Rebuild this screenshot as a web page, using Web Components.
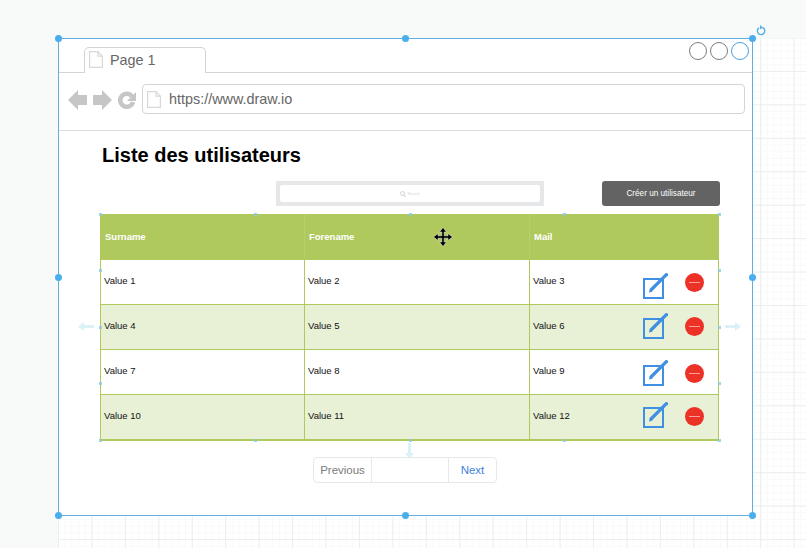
<!DOCTYPE html>
<html lang="fr">
<head>
<meta charset="utf-8">
<title>Liste des utilisateurs</title>
<style>
  html, body { margin: 0; height: 100%; overflow: hidden; background: #f8fafa; }
  body { font-family: "Liberation Sans", Arial, sans-serif; }
</style>
</head>
<body>
<draw-canvas>
  <browser-window url="https://www.draw.io" tab="Page 1">
    <h-title>Liste des utilisateurs</h-title>
    <tool-row>
      <search-box></search-box>
      <dark-button>Créer un utilisateur</dark-button>
    </tool-row>
    <user-table></user-table>
    <page-nav></page-nav>
  </browser-window>
  <select-frame></select-frame>
  <move-cursor></move-cursor>
</draw-canvas>

<script>
const pageIcon = `<svg width="14" height="17" viewBox="0 0 14 17" fill="#fff" stroke="#d8d8d8" stroke-width="1.200"><path d="M.6.6h8.400l4.400 4.600v11.200H.6z"/><path d="M9 .6v4.600h4.400" fill="none"/></svg>`;

class DrawCanvas extends HTMLElement {
    constructor() {
        super();
        this.attachShadow({mode: 'open'}).innerHTML = `
            <style>
                :host { display: block; position: relative; width: 806px; height: 548px; overflow: hidden; }
                .grid {
                    position: absolute; left: 58px; top: 38px; right: 0; bottom: 0;
                    background-color: #fff;
                    background-image:
                        linear-gradient(#eceeee 1px, transparent 1px),
                        linear-gradient(90deg, #eceeee 1px, transparent 1px),
                        linear-gradient(#f8f9f9 1px, transparent 1px),
                        linear-gradient(90deg, #f8f9f9 1px, transparent 1px);
                    background-size: 33.450px 33.450px, 33.450px 33.450px, 6.690px 6.690px, 6.690px 6.690px;
                    background-position: 0 -.5px, 0 0, 0 -.5px, 0 0;
                }
            </style>
            <div class="grid"></div>
            <slot></slot>`;
    }
}

class BrowserWindow extends HTMLElement {
    constructor() {
        super();
        const shadow = this.attachShadow({mode: 'open'});
        shadow.innerHTML = `
            <style>
                :host {
                    display: flex; flex-direction: column;
                    position: absolute; left: 58px; top: 38px;
                    width: 694px; height: 478px;
                    background: #fff; box-sizing: border-box;
                }
                .tabs {
                    height: 35px; box-sizing: border-box; padding: 9px 3px 0 26px;
                    border-bottom: 1px solid #d4d4d4;
                    display: flex; justify-content: space-between; align-items: flex-start;
                }
                .tab {
                    width: 122px; height: 26px; box-sizing: border-box;
                    border: 1px solid #d4d4d4; border-bottom: none;
                    border-radius: 5px 5px 0 0; background: #fff;
                    display: flex; align-items: center; gap: 7px; padding: 0 0 2px 4px;
                    color: #666; font-size: 14.400px;
                    margin-bottom: -1px; position: relative;
                }
                .dots { display: flex; gap: 3px; margin-top: -5px; }
                .dots i { width: 16px; height: 16px; border: 1px solid #7d7d7d; border-radius: 50%; display: block; }
                .dots i:last-child { border-color: #4a9fe0; }
                .bar {
                    height: 58px; box-sizing: border-box; padding: 11px 7px 0 10px;
                    border-bottom: 1px solid #ddd;
                    display: flex; align-items: flex-start; gap: 6px;
                }
                .nav { display: flex; align-items: center; gap: 6px; height: 32px; }
                .url {
                    flex: 1; height: 30px; box-sizing: border-box;
                    border: 1px solid #d4d4d4; border-radius: 4px;
                    display: flex; align-items: center; gap: 8px; padding-left: 4px;
                    color: #666; font-size: 14.400px;
                }
                .content { flex: 1; padding: 12px 32px 0 42px; }
            </style>
            <div class="tabs">
                <div class="tab">${pageIcon}<span>${this.getAttribute('tab')}</span></div>
                <div class="dots"><i></i><i></i><i></i></div>
            </div>
            <div class="bar">
                <div class="nav">
                    <svg width="19" height="20" viewBox="0 0 19 20" fill="#c6c6c6"><path d="M0 10 10 0v5h9v10h-9v5z"/></svg>
                    <svg width="19" height="20" viewBox="0 0 19 20" fill="#c6c6c6"><path d="M19 10 9 0v5H0v10h9v5z"/></svg>
                    <svg width="18" height="18" viewBox="0 0 18 18"><path d="M14 5.500A6.500 6.500 0 1 0 15 11" fill="none" stroke="#c6c6c6" stroke-width="4.500"/><path d="M18 1v9h-9z" fill="#c6c6c6"/></svg>
                </div>
                <div class="url">${pageIcon}<span>${this.getAttribute('url')}</span></div>
            </div>
            <div class="content"><slot></slot></div>`;
    }
}

class HTitle extends HTMLElement {
    constructor() {
        super();
        this.attachShadow({mode: 'open'}).innerHTML = `
            <style>
                :host { display: block; height: 24px; margin-left: 2px; font-size: 20px; line-height: 24px; font-weight: bold; color: #000; }
            </style>
            <slot></slot>`;
    }
}

class ToolRow extends HTMLElement {
    constructor() {
        super();
        this.attachShadow({mode: 'open'}).innerHTML = `
            <style>
                :host { display: flex; justify-content: space-between; height: 25px; margin-top: 14px; padding-left: 176px; width: 444px; }
            </style>
            <slot></slot>`;
    }
}

class SearchBox extends HTMLElement {
    constructor() {
        super();
        this.attachShadow({mode: 'open'}).innerHTML = `
            <style>
                :host {
                    display: block; width: 268px; height: 25px; box-sizing: border-box;
                    padding: 4px; background: #e6e7e8;
                }
                div {
                    height: 100%; background: #fff; border-radius: 2px;
                    display: flex; align-items: center; justify-content: center; gap: 1px;
                    color: #d4d6d8; font-size: 4px;
                }
            </style>
            <div>
                <svg width="6" height="6" viewBox="0 0 6 6" fill="none" stroke="#cfd2d4"><circle cx="2.500" cy="2.500" r="2"/><path d="M4 4l2 2"/></svg>
                <span>Search</span>
            </div>`;
    }
}

class DarkButton extends HTMLElement {
    constructor() {
        super();
        this.attachShadow({mode: 'open'}).innerHTML = `
            <style>
                :host {
                    display: flex; align-items: center; justify-content: center;
                    width: 118px; height: 25px; border-radius: 3px;
                    background: #636363; color: #fff; font-size: 8.200px;
                }
            </style>
            <slot></slot>`;
    }
}

class EditIcon extends HTMLElement {
    constructor() {
        super();
        this.attachShadow({mode: 'open'}).innerHTML = `
            <style>:host { display: block; width: 26px; height: 26px; } svg { display: block; }</style>
            <svg width="26" height="26" viewBox="0 0 26 26" fill="none">
                <rect x="2" y="6" width="19" height="19" stroke="#3f8fe3" stroke-width="2"/>
                <path d="M8.500 17.500 25.500.5" stroke="#3f8fe3" stroke-width="3.200"/>
                <path d="M7 19.500l.8-3.500 2.700 2.700z" fill="#3f8fe3"/>
            </svg>`;
    }
}

class DeleteIcon extends HTMLElement {
    constructor() {
        super();
        this.attachShadow({mode: 'open'}).innerHTML = `
            <style>
                :host { display: flex; align-items: center; justify-content: center; width: 19px; height: 19px; border-radius: 50%; background: #ec3126; }
                i { display: block; width: 11px; height: 1px; background: #f4a09a; }
            </style>
            <i></i>`;
    }
}

class UserTable extends HTMLElement {
    constructor() {
        super();
        const head = ['Surname', 'Forename', 'Mail'];
        const rows = [
            ['Value 1', 'Value 2', 'Value 3'],
            ['Value 4', 'Value 5', 'Value 6'],
            ['Value 7', 'Value 8', 'Value 9'],
            ['Value 10', 'Value 11', 'Value 12']
        ];
        // icons are not aligned the same way in each row of the mockup
        const editTop = [13, 8, 10, 7];
        const delTop = [13, 12, 14, 12];
        const rowHtml = rows.map((r, i) => `
            <div class="row ${i % 2 ? 'alt' : ''}">
                <div class="cell">${r[0]}</div>
                <div class="cell">${r[1]}</div>
                <div class="cell last">
                    <span>${r[2]}</span>
                    <div class="acts">
                        <edit-icon style="margin-top:${editTop[i]}px"></edit-icon>
                        <delete-icon style="margin-top:${delTop[i]}px"></delete-icon>
                    </div>
                </div>
            </div>`).join('');
        this.attachShadow({mode: 'open'}).innerHTML = `
            <style>
                :host {
                    display: block; width: 619px; margin-top: 8px;
                    box-sizing: border-box; color: #111; font-size: 9.500px;
                    border: 1px solid #afc95d; border-top: none; border-bottom-width: 2px;
                }
                .row {
                    display: grid; grid-template-columns: 203px 225px 1fr;
                    height: 45px; box-sizing: border-box; border-top: 1px solid #afc95d;
                }
                .row:nth-child(2) { border-top: none; }
                .row.alt { background: #e8f0d6; }
                .row.head { background: #afc95d; color: #fff; font-weight: bold; border-top: none; }
                .cell { display: flex; align-items: center; padding-left: 3px; padding-bottom: 4px; border-left: 1px solid #afc95d; }
                .cell:first-child { border-left: none; }
                .head .cell { padding-left: 4px; padding-bottom: 0; border-left-color: #b7cf6b; }
                .acts { margin-left: auto; margin-right: 14px; align-self: flex-start; display: flex; align-items: flex-start; gap: 17px; }
            </style>
            <div class="row head"><div class="cell">${head[0]}</div><div class="cell">${head[1]}</div><div class="cell">${head[2]}</div></div>
            ${rowHtml}`;
    }
}

class PageNav extends HTMLElement {
    constructor() {
        super();
        this.attachShadow({mode: 'open'}).innerHTML = `
            <style>
                :host {
                    display: grid; grid-template-columns: 58px 76px 1fr;
                    width: 184px; height: 26px; box-sizing: border-box;
                    margin: 16px 0 0 213px;
                    border: 1px solid #e8e8e8; border-radius: 4px; font-size: 11.500px;
                }
                div { display: flex; align-items: center; justify-content: center; }
                .prev { color: #7b7b7b; border-right: 1px solid #e8e8e8; }
                .next { color: #3f7fdc; border-left: 1px solid #e8e8e8; }
            </style>
            <div class="prev">Previous</div><div></div><div class="next">Next</div>`;
    }
}

class SelectFrame extends HTMLElement {
    constructor() {
        super();
        // handles and connection points sit on top of the selected shape
        const big = [[58, 38], [405, 38], [752, 38], [58, 277], [752, 277], [58, 515], [405, 515], [752, 515]];
        const small = [[100, 214], [255, 214], [410, 214], [564, 214], [719, 214], [719, 270], [719, 327], [719, 383],
                       [100, 270], [100, 327], [100, 383], [100, 440], [255, 440], [410, 440], [564, 440], [719, 440]];
        const arrows = [
            ['M0 4.500 6 0v3h10v3H6v3z', 78, 322, 16, 9],
            ['M16 4.500 10 0v3H0v3h10v3z', 725, 322, 16, 9],
            ['M4.500 16 0 10h3V0h3v10h3z', 405, 443, 9, 16]
        ];
        this.attachShadow({mode: 'open'}).innerHTML = `
            <style>
                :host { position: absolute; inset: 0; display: block; pointer-events: none; }
                .frame { position: absolute; left: 58px; top: 38px; width: 695px; height: 478px; border: 1px solid #62aede; box-sizing: border-box; }
                .h { position: absolute; width: 7px; height: 7px; margin: -3px; border-radius: 50%; background: #4aaeee; }
                .s { position: absolute; width: 3px; height: 3px; margin: -1px; background: #8ccbe4; opacity: .8; }
                svg { position: absolute; }
            </style>
            <div class="frame"></div>
            ${small.map(p => `<i class="s" style="left:${p[0]}px;top:${p[1]}px"></i>`).join('')}
            ${big.map(p => `<i class="h" style="left:${p[0]}px;top:${p[1]}px"></i>`).join('')}
            ${arrows.map(a => `<svg style="left:${a[1]}px;top:${a[2]}px" width="${a[3]}" height="${a[4]}" viewBox="0 0 ${a[3]} ${a[4]}"><path d="${a[0]}" fill="#dcf0f8"/></svg>`).join('')}
            <svg style="left:756px;top:25px" width="10" height="11" viewBox="0 0 10 11" fill="none"><path d="M6.500 2.500A3.700 3.700 0 1 1 3 2.800" stroke="#58aee2" stroke-width="1.400"/><path d="M4 0v4.500l2.800-2z" fill="#58aee2"/></svg>`;
    }
}

class MoveCursor extends HTMLElement {
    constructor() {
        super();
        this.attachShadow({mode: 'open'}).innerHTML = `
            <style>:host { position: absolute; left: 433px; top: 227px; width: 20px; height: 20px; } svg { display: block; }</style>
            <svg width="20" height="20" viewBox="0 0 20 20">
                <path d="M10 .5l3.500 4.500h-2.300v3.800H15V6.500l4.500 3.500-4.500 3.500v-2.300h-3.800V15h2.300L10 19.500 6.500 15h2.300v-3.800H5v2.300L.5 10 5 6.500v2.300h3.800V5H6.500z" fill="#000" stroke="#fff" stroke-width=".5"/>
            </svg>`;
    }
}

customElements.define('draw-canvas', DrawCanvas);
customElements.define('browser-window', BrowserWindow);
customElements.define('h-title', HTitle);
customElements.define('tool-row', ToolRow);
customElements.define('search-box', SearchBox);
customElements.define('dark-button', DarkButton);
customElements.define('edit-icon', EditIcon);
customElements.define('delete-icon', DeleteIcon);
customElements.define('user-table', UserTable);
customElements.define('page-nav', PageNav);
customElements.define('select-frame', SelectFrame);
customElements.define('move-cursor', MoveCursor);
</script>
</body>
</html>
